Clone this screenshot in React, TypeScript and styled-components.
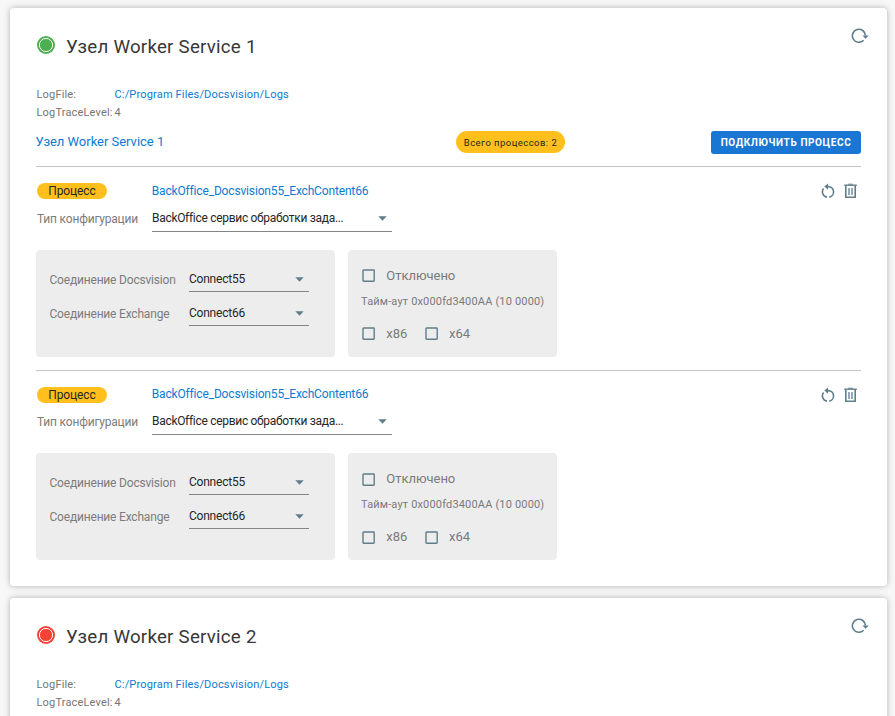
import React from "react";
import styled, { createGlobalStyle } from "styled-components";

const GlobalStyle = createGlobalStyle`
  * { box-sizing: border-box; }
  body {
    margin: 0;
    background: #f7f7f7;
    font-family: Roboto, "Liberation Sans", sans-serif;
    color: #262626;
  }
`;

const Page = styled.main`
  display: flex;
  flex-direction: column;
  gap: 12px;
  height: 716px;
  padding: 8px 8px 0 10px;
  overflow: hidden;
`;

const Card = styled.section<{ $open: boolean }>`
  height: ${(p) => (p.$open ? 578 : 140)}px;
  flex: none;
  padding: 0 26px;
  border-radius: 4px;
  background: #fff;
  box-shadow: 0 0 6px rgba(0, 0, 0, 0.28);
`;

const CardHeader = styled.header`
  display: flex;
  align-items: flex-start;
  height: 78px;
`;

const Status = styled.svg`
  flex: none;
  margin: 28px 11px 0 1px;
`;

const Title = styled.h1`
  margin: 26px auto 0 0;
  font-size: 18.7px;
  line-height: 26px;
  font-weight: 400;
  letter-spacing: 0.24px;
  color: #383838;
`;

const RefreshButton = styled.button`
  display: flex;
  margin: 20px -8px 0 0;
  padding: 0;
  border: 0;
  background: none;
`;

const LogTable = styled.dl`
  display: grid;
  grid-template-columns: 78px auto;
  grid-auto-rows: 18px;
  margin: 0 0 0 0.5px;
  font-size: 11px;
  line-height: 18px;
  letter-spacing: 0.17px;
  color: #757575;
`;

const LogTerm = styled.dt`
  white-space: nowrap;
`;

const LogValue = styled.dd<{ $link?: boolean }>`
  margin: 0;
  color: ${(p) => (p.$link ? "#0b7bd1" : "#757575")};
`;

const Summary = styled.div`
  display: grid;
  grid-template-columns: 420px 1fr auto;
  align-items: center;
  height: 24px;
  margin-top: 8px;
`;

const NodeLink = styled.a`
  font-size: 13px;
  line-height: 20px;
  letter-spacing: -0.02px;
  margin-left: -0.5px;
  color: #0b7bd1;
`;

const CountBadge = styled.span`
  justify-self: start;
  width: 109px;
  height: 22px;
  border-radius: 11px;
  background: #ffc01e;
  font-size: 9.5px;
  line-height: 23px;
  letter-spacing: 0.45px;
  text-align: center;
  white-space: nowrap;
`;

const ConnectButton = styled.button`
  width: 150px;
  height: 23px;
  padding: 0;
  border: 0;
  border-radius: 3px;
  background: #1976d2;
  color: #fff;
  font: 700 10px/23px Roboto, "Liberation Sans", sans-serif;
  letter-spacing: 0.61px;
  white-space: nowrap;
`;

const ProcessList = styled.div`
  padding-top: 12.3px;
`;

const ProcessBlock = styled.article`
  height: 203.5px;
  border-top: 1px solid #c4c4c4;
`;

const ProcessHead = styled.div`
  display: grid;
  grid-template-columns: 116px 1fr auto;
  align-items: center;
  height: 20px;
  margin-top: 13.7px;
`;

const ProcessTag = styled.span`
  width: 70px;
  height: 16px;
  margin: 1px 0 0 1px;
  border-radius: 8px;
  background: #ffc01e;
  font-size: 12px;
  line-height: 16px;
  letter-spacing: -0.1px;
  text-align: center;
`;

const ProcessLink = styled.a`
  font-size: 12px;
  line-height: 20px;
  letter-spacing: -0.16px;
  margin-left: -0.3px;
  color: #0b7bd1;
`;

const Actions = styled.div`
  display: flex;
  gap: 8.5px;
  margin: 1px 4.5px 0 0;
`;

const ConfigRow = styled.div`
  display: grid;
  grid-template-columns: 115px 240px;
  height: 32px;
  padding-left: 1px;
`;

const FieldLabel = styled.span`
  font-size: 12px;
  line-height: 20px;
  letter-spacing: -0.19px;
  color: #7c7c7c;
  white-space: nowrap;
  padding-top: 8px;
`;

const Select = styled.div`
  display: flex;
  justify-content: space-between;
  align-items: flex-start;
  height: 31px;
  padding: 7px 5px 0 0;
  border-bottom: 1px solid #858585;
  font-size: 12px;
  line-height: 20px;
  letter-spacing: -0.3px;
  white-space: nowrap;
`;

const Arrow = styled.svg`
  flex: none;
  margin-top: 8px;
`;

const Panels = styled.div`
  display: flex;
  gap: 13px;
  margin-top: 17px;
`;

const Panel = styled.div<{ $width: number }>`
  width: ${(p) => p.$width}px;
  height: 107px;
  border-radius: 4px;
  background: #ededed;
`;

const Connections = styled(Panel)`
  display: grid;
  grid-template-columns: 139.5px 120px;
  grid-template-rows: 34px 34px;
  padding: 11px 0 0 13.5px;

  ${FieldLabel} {
    padding-top: 9px;
  }

  ${Select} {
    padding-top: 8px;
    letter-spacing: -0.22px;
  }
`;

const Options = styled(Panel)`
  display: flex;
  flex-direction: column;
  padding: 16px 0 0 13px;
  color: #7a7a7a;
`;

const CheckRow = styled.div`
  display: flex;
  gap: 17.5px;
  height: 20px;
  padding-left: 1px;
`;

const CheckLabel = styled.label`
  display: flex;
  align-items: center;
  gap: 11.3px;
  font-size: 13px;
  line-height: 20px;
  letter-spacing: -0.03px;
`;

const Timeout = styled.div`
  height: 38px;
  padding-top: 7px;
  font-size: 11px;
  line-height: 18px;
  letter-spacing: 0.17px;
  white-space: nowrap;
`;

const INK = "#607d8b";

function StatusIcon({ color }: { color: string }) {
  return (
    <Status width="18" height="18" viewBox="0 0 18 18">
      <circle cx="9" cy="9" r="9" fill={color} />
      <circle cx="9" cy="9" r="6.6" fill="none" stroke="#fff" strokeWidth="1" />
    </Status>
  );
}

function RefreshIcon() {
  return (
    <svg width="18" height="16" viewBox="0 0 18 16" fill="none">
      <path d="M12.6 12.2A6.5 6.5 0 1 1 14.4 7.6" stroke={INK} strokeWidth="1.6" />
      <path d="M11.4 7.4H17.8L14.6 10.8Z" fill={INK} />
    </svg>
  );
}

function RestartIcon() {
  return (
    <svg width="14" height="16" viewBox="0 0 14 16" fill="none">
      <path d="M5.5 3.6H7.2A5.3 5.3 0 0 1 8.3 14.1" stroke={INK} strokeWidth="1.6" />
      <path d="M6 14.1A5.4 5.4 0 0 1 2.6 5.4" stroke={INK} strokeWidth="1.6" />
      <path d="M7 0.4V6.8L3.4 3.6Z" fill={INK} />
    </svg>
  );
}

function TrashIcon() {
  return (
    <svg width="13" height="16" viewBox="0 0 13 16" fill="none" stroke={INK}>
      <path d="M0.2 2.2H12.8" strokeWidth="1.4" />
      <path d="M4.2 1.2H8.8" strokeWidth="1" />
      <path d="M1.8 2.5V14.3H11.2V2.5" strokeWidth="1.6" />
      <path d="M5 5V12M8 5V12" strokeWidth="1.3" />
    </svg>
  );
}

function SelectField({ value }: { value: string }) {
  return (
    <Select>
      {value}
      <Arrow width="9" height="5" viewBox="0 0 9 5">
        <path d="M0.3 0.2H8.7L4.5 4.7Z" fill={INK} />
      </Arrow>
    </Select>
  );
}

function Check({ label }: { label: string }) {
  return (
    <CheckLabel>
      <svg width="13" height="13" viewBox="0 0 13 13">
        <rect x="1" y="1" width="11.2" height="11.2" rx="0.6" fill="none" stroke={INK} strokeWidth="1.4" />
      </svg>
      {label}
    </CheckLabel>
  );
}

function Process() {
  return (
    <ProcessBlock>
      <ProcessHead>
        <ProcessTag>Процесс</ProcessTag>
        <ProcessLink>BackOffice_Docsvision55_ExchContent66</ProcessLink>
        <Actions>
          <RestartIcon />
          <TrashIcon />
        </Actions>
      </ProcessHead>
      <ConfigRow>
        <FieldLabel>Тип конфигурации</FieldLabel>
        <SelectField value="BackOffice сервис обработки зада..." />
      </ConfigRow>
      <Panels>
        <Connections $width={299}>
          <FieldLabel>Соединение Docsvision</FieldLabel>
          <SelectField value="Connect55" />
          <FieldLabel>Соединение Exchange</FieldLabel>
          <SelectField value="Connect66" />
        </Connections>
        <Options $width={209}>
          <CheckRow>
            <Check label="Отключено" />
          </CheckRow>
          <Timeout>Тайм-аут 0x000fd3400AA (10 0000)</Timeout>
          <CheckRow>
            <Check label="x86" />
            <Check label="x64" />
          </CheckRow>
        </Options>
      </Panels>
    </ProcessBlock>
  );
}

interface NodeCardProps {
  name: string;
  color: string;
  open?: boolean;
}

function NodeCard({ name, color, open = false }: NodeCardProps) {
  return (
    <Card $open={open}>
      <CardHeader>
        <StatusIcon color={color} />
        <Title>{name}</Title>
        <RefreshButton aria-label="Обновить">
          <RefreshIcon />
        </RefreshButton>
      </CardHeader>
      <LogTable>
        <LogTerm>LogFile:</LogTerm>
        <LogValue $link>C:/Program Files/Docsvision/Logs</LogValue>
        <LogTerm>LogTraceLevel:</LogTerm>
        <LogValue>4</LogValue>
      </LogTable>
      {open && (
        <>
          <Summary>
            <NodeLink>{name}</NodeLink>
            <CountBadge>Всего процессов: 2</CountBadge>
            <ConnectButton>ПОДКЛЮЧИТЬ ПРОЦЕСС</ConnectButton>
          </Summary>
          <ProcessList>
            <Process />
            <Process />
          </ProcessList>
        </>
      )}
    </Card>
  );
}

export default function App() {
  return (
    <>
      <GlobalStyle />
      <Page>
        <NodeCard name="Узел Worker Service 1" color="#4caf50" open />
        <NodeCard name="Узел Worker Service 2" color="#f44336" />
      </Page>
    </>
  );
}
